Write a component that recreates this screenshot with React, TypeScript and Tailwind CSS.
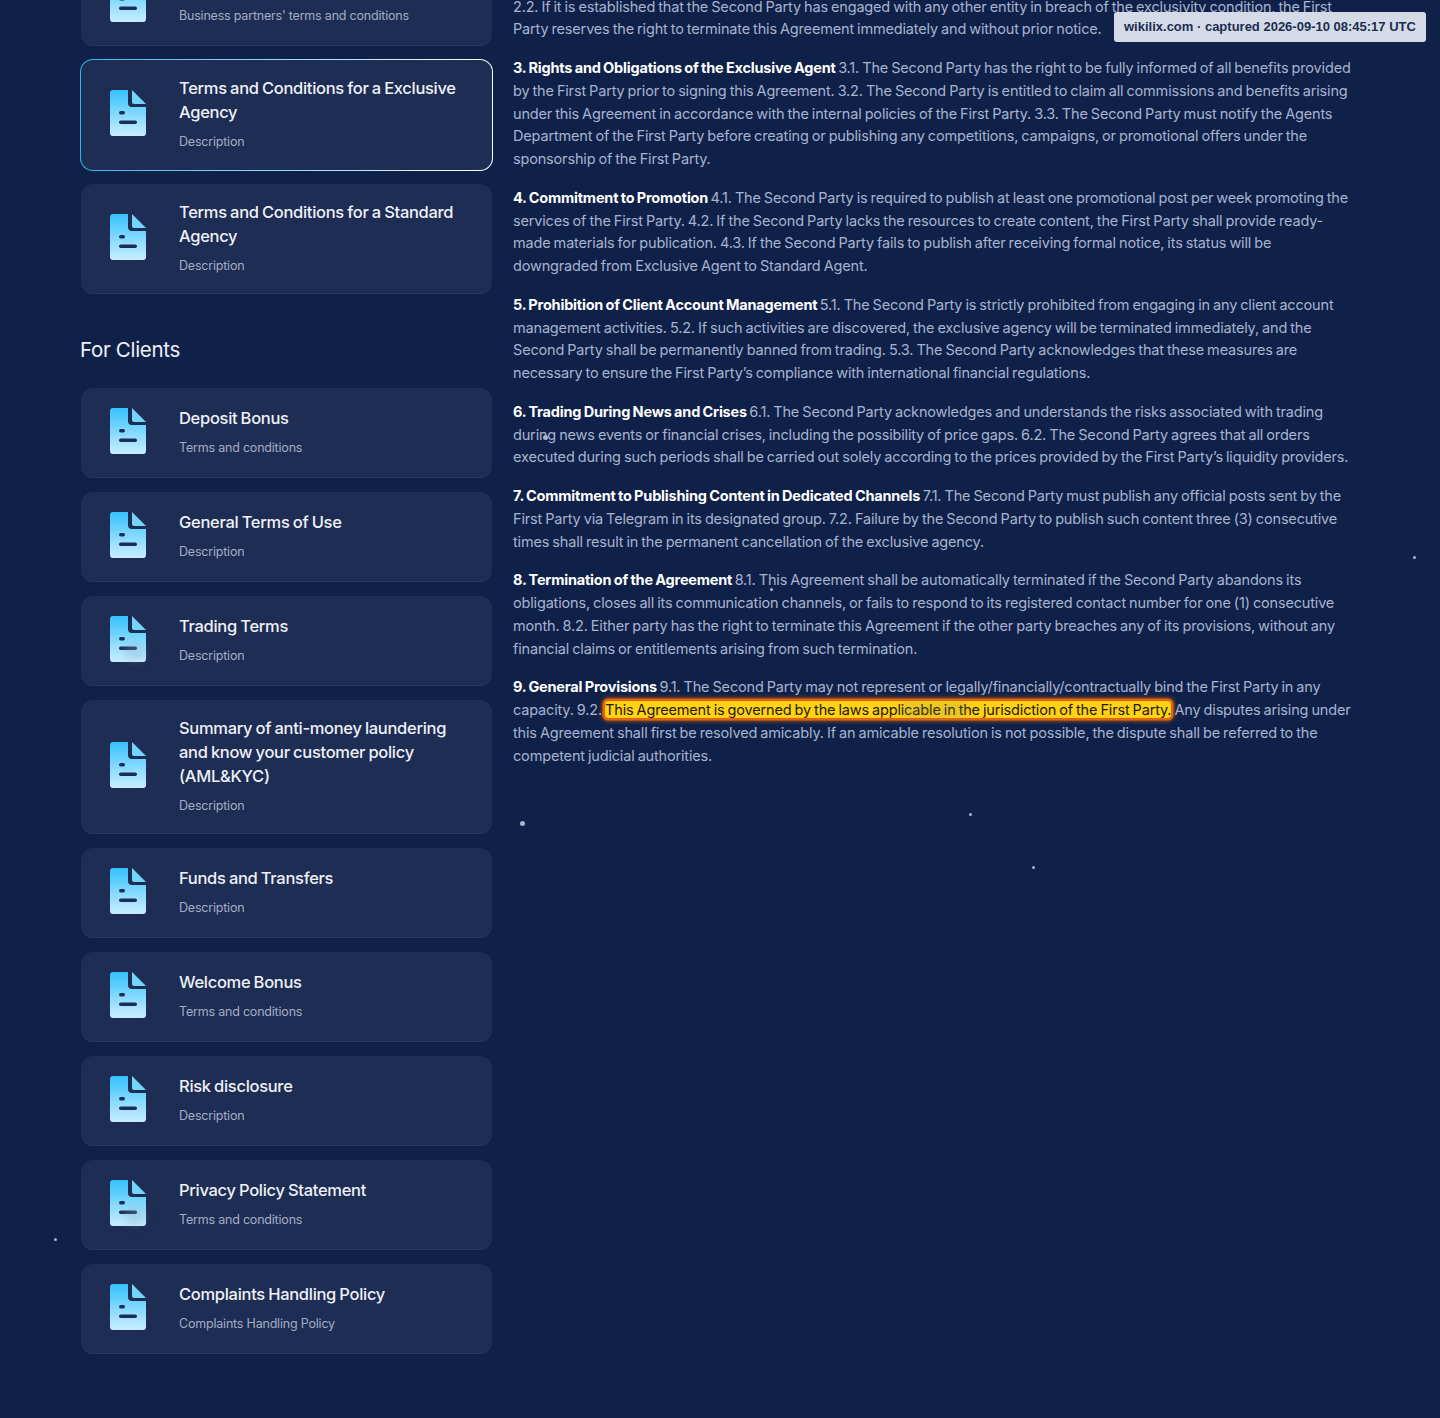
const docs = [
  { title: ["Deposit Bonus"], desc: "Terms and conditions" },
  { title: ["General Terms of Use"], desc: "Description" },
  { title: ["Trading Terms"], desc: "Description", smudge: true },
  {
    title: ["Summary of anti-money laundering", "and know your customer policy", "(AML&KYC)"],
    desc: "Description",
  },
  { title: ["Funds and Transfers"], desc: "Description" },
  { title: ["Welcome Bonus"], desc: "Terms and conditions" },
  { title: ["Risk disclosure"], desc: "Description" },
  { title: ["Privacy Policy Statement"], desc: "Terms and conditions", smudge: true },
  { title: ["Complaints Handling Policy"], desc: "Complaints Handling Policy" },
];

const dots = [
  "left-[520px] top-[821px] h-[5px] w-[5px]",
  "left-[969px] top-[813px] h-[3px] w-[3px]",
  "left-[1032px] top-[866px] h-[3px] w-[3px]",
  "left-[1413px] top-[556px] h-[3px] w-[3px]",
  "left-[54px] top-[1238px] h-[3px] w-[3px]",
  "left-[543px] top-[435px] h-[5px] w-[5px]",
  "left-[770px] top-[588px] h-[3px] w-[3px]",
];

function DocIcon({ smudge = false }: { smudge?: boolean }) {
  return (
    <div className="relative mb-0.5 h-[46px] w-[36px] shrink-0">
      <svg viewBox="0 0 36 46" className="h-[46px] w-[36px]">
        <defs>
          <linearGradient id="docFill" x1="0" y1="0" x2="0" y2="1">
            <stop offset="0" stopColor="#35c2fd" />
            <stop offset="1" stopColor="#c9eeff" />
          </linearGradient>
        </defs>
        <path
          fill="url(#docFill)"
          d="M3 0H18V13a4 4 0 0 0 4 4H36V43a3 3 0 0 1-3 3H3a3 3 0 0 1-3-3V3a3 3 0 0 1 3-3Z"
        />
        <path fill="#74d5fc" d="M22 0L36 14H24a2 2 0 0 1-2-2Z" />
        <rect x="9" y="21" width="6" height="3.5" rx="1.75" fill="#1e2d53" />
        <rect x="9" y="30.5" width="18" height="3.5" rx="1.75" fill="#1e2d53" />
      </svg>
      {smudge && (
        <div className="absolute bottom-0 right-0 h-[20px] w-[22px] rounded-full bg-[#8fa6bd]/25 blur-[3px]" />
      )}
    </div>
  );
}

function CardBody({ title, desc, smudge }: { title: string[]; desc: string; smudge?: boolean }) {
  return (
    <>
      <DocIcon smudge={smudge} />
      <div>
        <div className="text-[16.5px] font-[450] leading-6 text-[#eef1f7] tracking-[-0.3px] [word-spacing:-0.8px]">
          {title.map((line) => (
            <div key={line} className="whitespace-nowrap">
              {line}
            </div>
          ))}
        </div>
        <div className="mt-2 text-[12.5px] leading-5 text-[#a3adc6] tracking-[-0.2px]">{desc}</div>
      </div>
    </>
  );
}

function Card(props: { title: string[]; desc: string; smudge?: boolean }) {
  return (
    <div className="mx-px flex min-h-[90px] items-center gap-[33px] rounded-xl border-b border-[#263760] bg-[#1e2d53] pb-[17px] pl-[29px] pr-4 pt-4">
      <CardBody {...props} />
    </div>
  );
}

function ActiveCard() {
  return (
    <div className="-my-px rounded-[13px] bg-gradient-to-r from-[#2fb4ee] via-[#9ed8f5] to-white p-px">
      <div className="flex items-center gap-[33px] rounded-xl bg-[#1e2d53] pb-[18px] pl-[29px] pr-4 pt-4">
        <CardBody title={["Terms and Conditions for a Exclusive", "Agency"]} desc="Description" />
      </div>
    </div>
  );
}

function Clause({ head, lines }: { head?: string; lines: React.ReactNode[] }) {
  return (
    <p className="mb-4 whitespace-nowrap">
      {head && <strong className="font-bold tracking-[-0.2px] text-white">{head} </strong>}
      {lines.map((line, i) => (
        <span key={i}>
          {line}
          {i < lines.length - 1 && <br />}
        </span>
      ))}
    </p>
  );
}

export default function App() {
  return (
    <div className="relative h-[1418px] w-full overflow-hidden bg-[#0f2149] font-['Inter',sans-serif]">
      <div className="-mt-[44px] flex pl-[80px]">
        <aside className="w-[413px] shrink-0">
          <div className="flex flex-col gap-[14px]">
            <Card title={["Business Partners"]} desc="Business partners' terms and conditions" />
            <ActiveCard />
            <Card title={["Terms and Conditions for a Standard", "Agency"]} desc="Description" />
          </div>
          <h2 className="mb-[23px] mt-[41px] text-[20.5px] leading-[30px] text-[#eef1f7] tracking-[-0.3px]">For Clients</h2>
          <div className="flex flex-col gap-[14px]">
            {docs.map((doc) => (
              <Card key={doc.title[0]} title={doc.title} desc={doc.desc} smudge={doc.smudge} />
            ))}
          </div>
        </aside>

        <main className="ml-5 mt-[39.5px] text-[14.5px] leading-[22.75px] text-[#a8b3cf] tracking-[-0.17px] [word-spacing:-0.8px]">
          <Clause
            lines={[
              "2.2. If it is established that the Second Party has engaged with any other entity in breach of the exclusivity condition, the First",
              "Party reserves the right to terminate this Agreement immediately and without prior notice.",
            ]}
          />
          <Clause
            head="3. Rights and Obligations of the Exclusive Agent"
            lines={[
              "3.1. The Second Party has the right to be fully informed of all benefits provided",
              "by the First Party prior to signing this Agreement. 3.2. The Second Party is entitled to claim all commissions and benefits arising",
              "under this Agreement in accordance with the internal policies of the First Party. 3.3. The Second Party must notify the Agents",
              "Department of the First Party before creating or publishing any competitions, campaigns, or promotional offers under the",
              "sponsorship of the First Party.",
            ]}
          />
          <Clause
            head="4. Commitment to Promotion"
            lines={[
              "4.1. The Second Party is required to publish at least one promotional post per week promoting the",
              "services of the First Party. 4.2. If the Second Party lacks the resources to create content, the First Party shall provide ready-",
              "made materials for publication. 4.3. If the Second Party fails to publish after receiving formal notice, its status will be",
              "downgraded from Exclusive Agent to Standard Agent.",
            ]}
          />
          <Clause
            head="5. Prohibition of Client Account Management"
            lines={[
              "5.1. The Second Party is strictly prohibited from engaging in any client account",
              "management activities. 5.2. If such activities are discovered, the exclusive agency will be terminated immediately, and the",
              "Second Party shall be permanently banned from trading. 5.3. The Second Party acknowledges that these measures are",
              "necessary to ensure the First Party\u2019s compliance with international financial regulations.",
            ]}
          />
          <Clause
            head="6. Trading During News and Crises"
            lines={[
              "6.1. The Second Party acknowledges and understands the risks associated with trading",
              "during news events or financial crises, including the possibility of price gaps. 6.2. The Second Party agrees that all orders",
              "executed during such periods shall be carried out solely according to the prices provided by the First Party\u2019s liquidity providers.",
            ]}
          />
          <Clause
            head="7. Commitment to Publishing Content in Dedicated Channels"
            lines={[
              "7.1. The Second Party must publish any official posts sent by the",
              "First Party via Telegram in its designated group. 7.2. Failure by the Second Party to publish such content three (3) consecutive",
              "times shall result in the permanent cancellation of the exclusive agency.",
            ]}
          />
          <Clause
            head="8. Termination of the Agreement"
            lines={[
              "8.1. This Agreement shall be automatically terminated if the Second Party abandons its",
              "obligations, closes all its communication channels, or fails to respond to its registered contact number for one (1) consecutive",
              "month. 8.2. Either party has the right to terminate this Agreement if the other party breaches any of its provisions, without any",
              "financial claims or entitlements arising from such termination.",
            ]}
          />
          <Clause
            head="9. General Provisions"
            lines={[
              "9.1. The Second Party may not represent or legally/financially/contractually bind the First Party in any",
              <>
                capacity. 9.2.{" "}
                <span className="rounded-[3px] bg-[#ffd214] text-[#1f1a08] shadow-[0_0_0_2.5px_#e2640f,0_0_4px_3px_#b4500f]">
                  This Agreement is governed by the laws applicable in the jurisdiction of the First Party.
                </span>{" "}
                Any disputes arising under
              </>,
              "this Agreement shall first be resolved amicably. If an amicable resolution is not possible, the dispute shall be referred to the",
              "competent judicial authorities.",
            ]}
          />
        </main>
      </div>

      {dots.map((dot) => (
        <span key={dot} className={`absolute rounded-full bg-[#a9b4c6] ${dot}`} />
      ))}
      <span className="absolute left-[900px] top-[702px] h-[16px] w-[70px] rounded-full bg-[#8a8a6a]/20 blur-[3px]" />

      <div className="absolute left-[1114px] top-[12px] whitespace-nowrap rounded-[3px] bg-[#d5dbe6] px-[10px] py-[7px] font-['Liberation_Sans',sans-serif] text-[13px] font-bold leading-4 text-[#1b2c52]">
        wikilix.com · captured 2026-09-10 08:45:17 UTC
      </div>
    </div>
  );
}
